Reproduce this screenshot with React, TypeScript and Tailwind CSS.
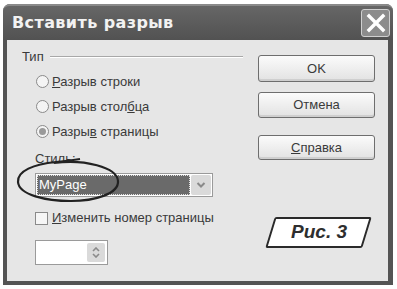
import { ReactNode } from "react";

const font = { fontFamily: '"Liberation Sans", Arial, sans-serif' };

function Radio({ checked, children }: { checked?: boolean; children: ReactNode }) {
  return (
    <div className="flex h-[25px] items-center pl-[14px]">
      <span className="flex h-[13px] w-[13px] items-center justify-center rounded-full border border-[#8a8a8a] bg-[#f4f4f4]">
        {checked && <span className="h-[7px] w-[7px] rounded-full bg-[#9a9a9a]" />}
      </span>
      <span className="ml-[3px] text-[13px] text-[#3a3a3a]">{children}</span>
    </div>
  );
}

function Button({ children, className = "" }: { children: ReactNode; className?: string }) {
  return (
    <div
      className={`flex items-center justify-center rounded-[3px] border border-[#6e6e6e] bg-gradient-to-b from-[#fbfbfb] to-[#e2e2e2] text-[13px] text-[#3a3a3a] shadow-[inset_0_-2px_0_#cfcfcf] ${className}`}
    >
      {children}
    </div>
  );
}

export default function App() {
  return (
    <div className="h-[289px] w-[397px] bg-white pl-[3px] pt-[4px]" style={font}>
      <div className="flex h-[281px] w-[390px] flex-col rounded-t-[7px] bg-[#545454]">
        {/* title bar */}
        <div className="flex h-[36px] items-center justify-between rounded-t-[7px] border-t-2 border-[#8a8a8a] bg-gradient-to-b from-[#666666] to-[#525252] pl-[9px] pr-[3px]">
          <span
            className="text-[16px] font-semibold tracking-[0.4px] text-[#f2f2f2]"
            style={{ fontFamily: '"DejaVu Sans", sans-serif' }}
          >
            Вставить разрыв
          </span>
          <span className="flex h-[28px] w-[29px] items-center justify-center rounded-[3px] border border-[#d0d0d0] bg-[#8c8c8c]">
            <svg width="20" height="20" viewBox="0 0 20 20">
              <path d="M3 3 L17 17 M17 3 L3 17" stroke="#ffffff" strokeWidth="3.4" strokeLinecap="square" />
            </svg>
          </span>
        </div>

        {/* body */}
        <div className="relative mb-[4px] ml-[4px] mr-[5px] flex flex-1 bg-[#e6e6e6]">
          <div className="w-[236px] pl-[15px] pt-[9px]">
            <div className="flex h-[16px] items-center gap-[6px]">
              <span className="text-[13px] text-[#3a3a3a]">Тип</span>
              <span className="h-0 flex-1 border-t border-b border-t-[#a8a8a8] border-b-white" />
            </div>
            <div className="mt-[4px]">
              <Radio>
                <span className="underline">Р</span>азрыв строки
              </Radio>
              <Radio>
                Разрыв стол<span className="underline">б</span>ца
              </Radio>
              <Radio checked>
                Разры<span className="underline">в</span> страницы
              </Radio>
            </div>
            <div className="ml-[13px] mt-[5px] h-[16px] text-[13px] text-[#3a3a3a]">Стиль:</div>
            <div className="ml-[13px] mt-[8px] flex h-[24px] w-[178px] items-center border border-[#9a9a9a] bg-white p-[1px]">
              <div className="flex h-full flex-1 items-center border border-dotted border-[#e0e0e0] bg-[#6a6a6a] pl-[1px] text-[13px] text-white">
                MyPage
              </div>
              <div className="ml-[1px] flex h-full w-[20px] items-center justify-center rounded-[2px] bg-[#dadada]">
                <svg width="10" height="8" viewBox="0 0 10 8">
                  <path d="M1.5 2 L5 5.5 L8.5 2" stroke="#8a8a8a" strokeWidth="2" fill="none" />
                </svg>
              </div>
            </div>
            <div className="ml-[13px] mt-[13px] flex h-[16px] items-center">
              <span className="h-[13px] w-[13px] border border-[#8a8a8a] bg-[#f6f6f6]" />
              <span className="ml-[4px] text-[13px] text-[#3a3a3a]">
                <span className="underline">И</span>зменить номер страницы
              </span>
            </div>
            <div className="ml-[13px] mt-[14px] flex h-[25px] w-[73px] items-center justify-end border border-[#9a9a9a] bg-white pr-[2px]">
              <div className="flex h-[19px] w-[18px] flex-col items-center justify-center gap-[1px] rounded-[2px] bg-[#dadada]">
                <svg width="8" height="5" viewBox="0 0 8 5">
                  <path d="M1 4 L4 1 L7 4" stroke="#8a8a8a" strokeWidth="1.6" fill="none" />
                </svg>
                <svg width="8" height="5" viewBox="0 0 8 5">
                  <path d="M1 1 L4 4 L7 1" stroke="#8a8a8a" strokeWidth="1.6" fill="none" />
                </svg>
              </div>
            </div>
          </div>

          <div className="ml-[15px] w-[117px] pt-[15px]">
            <Button className="h-[27px]">OK</Button>
            <Button className="mt-[10px] h-[26px]">Отмена</Button>
            <Button className="mt-[17px] h-[25px]">
              <span>
                <span className="underline">С</span>правка
              </span>
            </Button>
            <div className="ml-[12px] mt-[57px] flex h-[31px] w-[97px] -skew-x-[17deg] items-center justify-center rounded-[2px] border-2 border-[#2a2a2a] bg-white">
              <span className="skew-x-[17deg] text-[19px] font-bold italic text-[#2e2e2e]">Рис. 3</span>
            </div>
          </div>

          {/* hand-drawn annotation */}
          <svg className="pointer-events-none absolute left-[9px] top-[115px]" width="110" height="50" viewBox="0 0 110 50">
            <path
              d="M38 8 C68 4 101 12 102 26 C103 39 78 46 55 46 C30 46 3 40 2 27 C1 16 18 9 40 7 C50 6 58 5 64 4"
              stroke="#222222"
              strokeWidth="2.2"
              fill="none"
            />
          </svg>
        </div>
      </div>
    </div>
  );
}
